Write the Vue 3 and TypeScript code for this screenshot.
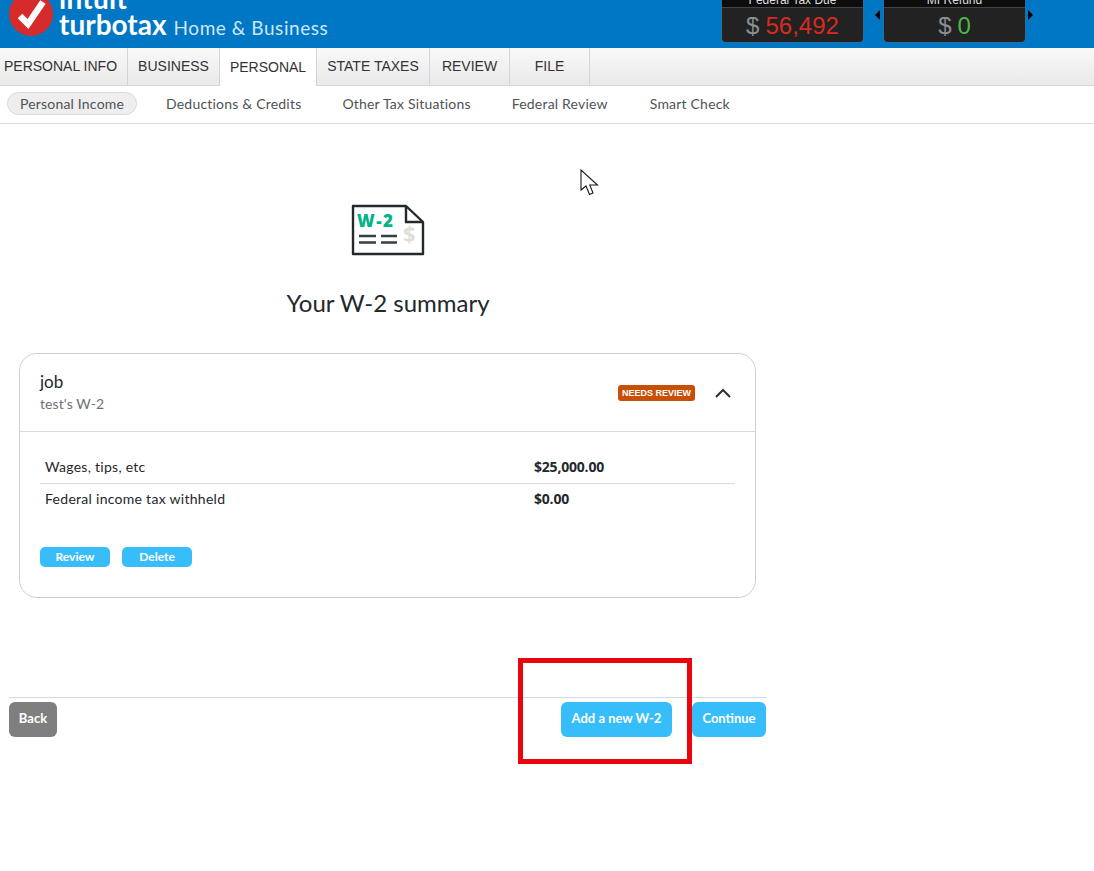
<script setup lang="ts">
interface Tab { label: string; width: number; active?: boolean }
const tabs: Tab[] = [
  { label: 'PERSONAL INFO', width: 128 },
  { label: 'BUSINESS', width: 92 },
  { label: 'PERSONAL', width: 97, active: true },
  { label: 'STATE TAXES', width: 113 },
  { label: 'REVIEW', width: 80 },
  { label: 'FILE', width: 80 },
]
const steps = ['Deductions & Credits', 'Other Tax Situations', 'Federal Review', 'Smart Check']
const rows = [
  { label: 'Wages, tips, etc', value: '$25,000.00' },
  { label: 'Federal income tax withheld', value: '$0.00' },
]
</script>

<template>
  <div class="page">
    <header class="top">
      <div class="brand">
        <svg class="mark" width="44" height="44" viewBox="0 0 44 44">
          <circle cx="22" cy="22" r="22" fill="#d52b2b" />
          <path d="M11 24 L19 32 L34 10" fill="none" stroke="#fff" stroke-width="6.5" stroke-linejoin="miter" />
        </svg>
        <div class="wordmark">
          <div class="intuit">intuit</div>
          <div class="product"><span class="turbotax">turbotax</span><span class="edition">Home &amp; Business</span></div>
        </div>
      </div>
      <div class="tiles">
        <div class="tile">
          <div class="tile-label">Federal Tax Due</div>
          <div class="tile-value"><span class="cur">$</span><span class="due">56,492</span></div>
        </div>
        <span class="arrow left"></span>
        <div class="tile">
          <div class="tile-label">MI Refund</div>
          <div class="tile-value"><span class="cur">$</span><span class="refund">0</span></div>
        </div>
        <span class="arrow right"></span>
      </div>
    </header>

    <nav class="tabs">
      <div
        v-for="t in tabs"
        :key="t.label"
        class="tab"
        :class="{ active: t.active }"
        :style="{ width: t.width + 'px' }"
      >{{ t.label }}</div>
    </nav>

    <nav class="steps">
      <span class="pill">Personal Income</span>
      <span v-for="s in steps" :key="s" class="step">{{ s }}</span>
    </nav>

    <main class="content">
      <svg class="w2" width="74" height="52" viewBox="0 0 74 52">
        <path d="M2 2 H55 L72 18 V50 H2 Z" fill="#fff" stroke="#23282d" stroke-width="2.4" stroke-linejoin="round" />
        <path d="M55 2 V18 H72" fill="none" stroke="#23282d" stroke-width="2.4" />
        <text x="6" y="23" class="w2-text">W-2</text>
        <path d="M8 32 H25 M8 38.500 H25 M30 32 H46 M30 38.500 H46" stroke="#3a3f44" stroke-width="2.4" />
        <text x="52" y="38" class="w2-dollar">$</text>
      </svg>
      <h1 class="title">Your W-2 summary</h1>

      <section class="card">
        <div class="card-head">
          <div>
            <div class="job">job</div>
            <div class="owner">test's W-2</div>
          </div>
          <div class="head-right">
            <span class="badge">NEEDS REVIEW</span>
            <svg width="16" height="10" viewBox="0 0 16 10"><path d="M1 9 L8 2 L15 9" fill="none" stroke="#2b2f33" stroke-width="2" /></svg>
          </div>
        </div>
        <div class="card-body">
          <div v-for="r in rows" :key="r.label" class="row">
            <span class="row-label">{{ r.label }}</span>
            <span class="row-value">{{ r.value }}</span>
          </div>
          <div class="actions">
            <button class="small">Review</button>
            <button class="small">Delete</button>
          </div>
        </div>
      </section>

      <footer class="foot">
        <button class="btn back">Back</button>
        <div class="foot-right">
          <button class="btn add">Add a new W-2</button>
          <button class="btn cont">Continue</button>
        </div>
      </footer>
    </main>

    <div class="highlight"></div>
    <svg class="cursor" width="20" height="28" viewBox="0 0 20 28">
      <path d="M1 1 V21 L6 17 L9.5 25.5 L13 24 L9.800 16 L17.500 16 Z" fill="#fff" stroke="#1a1a1a" stroke-width="1.1" />
    </svg>
  </div>
</template>

<style>
html, body { margin: 0; background: #fff; }
</style>

<style scoped>
.page {
  position: relative;
  width: 1094px;
  height: 871px;
  overflow: hidden;
  background: #fff;
  font-family: Lato, "Open Sans", sans-serif;
  color: #23282d;
}
.top {
  height: 48px;
  background: #0077c5;
  display: flex;
  justify-content: space-between;
  align-items: flex-end;
  overflow: hidden;
}
.brand { display: flex; align-items: flex-end; padding: 0 0 12px 9px; gap: 6px; }
.mark { flex: none; }
.wordmark { color: #fff; margin-bottom: -5px; }
.intuit { font-size: 28px; font-weight: 700; line-height: 22px; letter-spacing: .3px; margin-bottom: 2px; }
.product { display: flex; align-items: baseline; gap: 7px; line-height: 27px; }
.turbotax { font-size: 28px; font-weight: 700; }
.edition { font-size: 19px; color: #cfe6f6; letter-spacing: .55px; }
.tiles { display: flex; align-items: flex-end; height: 60px; box-sizing: border-box; padding: 0 66px 6px 0; }
.tile {
  width: 141px;
  background: #222;
  border-radius: 0 0 4px 4px;
  font-family: "Liberation Sans", sans-serif;
  text-align: center;
  box-shadow: 0 0 0 1px #2b6f9f;
}
.tile-label {
  height: 19px;
  line-height: 22px;
  font-size: 12px;
  color: #ddd;
  background: #0d0d0d;
  border-bottom: 1px solid #444;
  margin-top: -11px;
  box-sizing: border-box;
}
.tile-value { height: 34px; line-height: 35px; font-size: 24px; }
.cur { color: #8a8f94; margin-right: 6px; }
.due { color: #d62b22; }
.refund { color: #4cb944; }
.arrow { width: 0; height: 0; align-self: flex-start; border-top: 5px solid transparent; border-bottom: 5px solid transparent; }
.arrow.left { border-right: 5px solid #000; margin: 22px 4px 0 12px; }
.arrow.right { border-left: 5px solid #000; margin: 22px -5px 0 3px; }

.tabs {
  height: 38px;
  box-sizing: border-box;
  display: flex;
  background: linear-gradient(#f9f9f9, #e9e9e9);
  border-bottom: 1px solid #d8d8d8;
  font-family: "Liberation Sans", sans-serif;
  font-size: 14px;
  color: #333;
}
.tab {
  box-sizing: border-box;
  border-right: 1px solid #d4d4d4;
  text-align: center;
  line-height: 36px;
  white-space: nowrap;
}
.tab:first-child { padding-right: 6px; }
.tab.active { background: #fff; height: 38px; line-height: 38px; position: relative; }

.steps {
  height: 38px;
  box-sizing: border-box;
  display: flex;
  align-items: center;
  gap: 41px;
  padding: 0 0 2px 7px;
  border-bottom: 1px solid #d9dcdf;
  font-size: 14px;
  color: #4f5358;
  letter-spacing: .2px;
}
.step:last-child { margin-left: 1px; }
.pill {
  box-sizing: border-box;
  width: 130px;
  height: 23px;
  line-height: 21px;
  margin-right: -12px;
  text-align: center;
  background: #eee;
  border: 1px solid #d9d9d9;
  border-radius: 12px;
}

.content {
  width: 767px;
  box-sizing: border-box;
  padding: 80px 0 0 9px;
  display: flex;
  flex-direction: column;
  align-items: center;
}
.w2 { flex: none; }
.w2-text { font: 800 17px "Open Sans", sans-serif; fill: #00b38a; letter-spacing: 1.5px; }
.w2-dollar { font: 700 22px "Open Sans", sans-serif; fill: #dfdfd9; }
.title { margin: 31px 0 0; font-size: 24px; font-weight: 400; line-height: 32px; color: #23282d; }

.card {
  box-sizing: border-box;
  width: 737px;
  height: 245px;
  margin: 34px 0 0 10px;
  align-self: flex-start;
  border: 1px solid #c9d0d6;
  border-radius: 18px;
}
.card-head {
  height: 78px;
  box-sizing: border-box;
  padding: 17px 24px 0 20px;
  border-bottom: 1px solid #d4dade;
  display: flex;
  justify-content: space-between;
}
.job { font-size: 17px; line-height: 22px; }
.owner { font-size: 14px; line-height: 22px; color: #6b7075; letter-spacing: .1px; }
.head-right { display: flex; align-items: center; gap: 20px; height: 44px; }
.badge {
  background: #c94f06;
  color: #fff;
  font: 700 9px/16px "Liberation Sans", sans-serif;
  border-radius: 3px;
  padding: 0 4px;
  width: 69px;
  text-align: center;
  white-space: nowrap;
}
.card-body { padding: 20px 20px 0 20px; }
.row { height: 32px; box-sizing: border-box; display: flex; align-items: center; font-size: 14px; padding: 0 0 3px 5px; letter-spacing: .28px; }
.row:first-child { border-bottom: 1px solid #d4dade; padding-bottom: 2px; }
.row-label { width: 489px; }
.row-value { font-weight: 700; font-family: "Open Sans", sans-serif; letter-spacing: -.2px; }
.actions { display: flex; gap: 12px; margin-top: 31px; }
button { border: 0; color: #fff; font-family: Lato, sans-serif; font-weight: 700; padding: 0; }
.small { width: 70px; height: 20px; background: #38bdfb; border-radius: 5px; font-size: 12px; padding-bottom: 2px; }

.foot {
  box-sizing: border-box;
  width: 758px;
  margin-top: 99px;
  padding-top: 4px;
  align-self: flex-start;
  border-top: 1px solid #d4dade;
  display: flex;
  justify-content: space-between;
}
.foot-right { display: flex; gap: 20px; margin-right: 1px; }
.btn { height: 35px; border-radius: 6px; font-size: 13px; padding-bottom: 3px; }
.back { width: 48px; background: #7f7f7f; }
.add { width: 111px; background: #38bdfb; }
.cont { width: 74px; background: #38bdfb; }

.highlight {
  position: absolute;
  left: 518px;
  top: 658px;
  width: 174px;
  height: 106px;
  box-sizing: border-box;
  border: 5px solid #e8060c;
}
.cursor { position: absolute; left: 580px; top: 169px; }
</style>
